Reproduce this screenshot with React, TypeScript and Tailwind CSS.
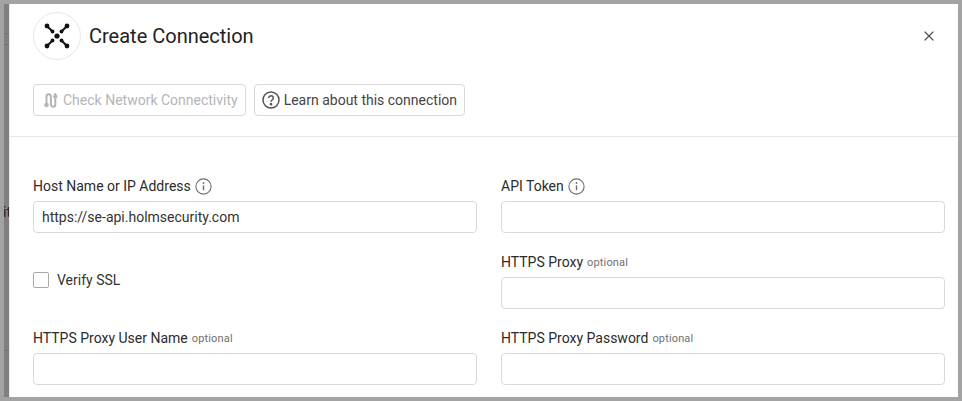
import { X } from "lucide-react";

const FONT = "font-['Roboto',sans-serif]";

function InfoIcon() {
  return (
    <svg width="17" height="17" viewBox="0 0 17 17" fill="none" className="ml-[4px] mt-[1px]">
      <circle cx="8.5" cy="8.5" r="7.6" stroke="#6e6e6e" strokeWidth="1.1" />
      <path d="M8.5 7.4v4.8" stroke="#6e6e6e" strokeWidth="1.4" />
      <circle cx="8.5" cy="5" r="0.95" fill="#6e6e6e" />
    </svg>
  );
}

function Logo() {
  return (
    <svg width="26" height="26" viewBox="0 0 26 26" fill="none">
      <path d="M3 3 8.5 8.5M23 3 17.5 8.5M3 23 8.5 17.5M23 23 17.5 17.5" stroke="#111" strokeWidth="2" />
      <circle cx="13" cy="13" r="2.6" fill="#111" />
      <circle cx="3" cy="3" r="2.4" fill="#111" />
      <circle cx="23" cy="3" r="2.4" fill="#111" />
      <circle cx="3" cy="23" r="2.4" fill="#111" />
      <circle cx="23" cy="23" r="2.4" fill="#111" />
      <circle cx="8.5" cy="8.5" r="1.9" fill="#111" />
      <circle cx="17.5" cy="8.5" r="1.9" fill="#111" />
      <circle cx="8.5" cy="17.5" r="1.9" fill="#111" />
      <circle cx="17.5" cy="17.5" r="1.9" fill="#111" />
    </svg>
  );
}

function NetworkIcon() {
  return (
    <svg width="18" height="20" viewBox="0 0 18 20" fill="none" stroke="#b5b5b5" strokeWidth="2">
      <path d="M4.5 14V6.5a2.2 2.2 0 0 1 4.4 0v8a2.2 2.2 0 0 0 4.4 0V6" />
      <path d="M11.4 7.2 13.3 3 15.2 7.2Z" fill="#b5b5b5" strokeWidth="1" />
      <circle cx="4.5" cy="15" r="2.3" fill="#b5b5b5" stroke="none" />
    </svg>
  );
}

function HelpIcon() {
  return (
    <svg width="18" height="18" viewBox="0 0 18 18" fill="none" stroke="#555" strokeWidth="1.5">
      <circle cx="9" cy="9" r="8" />
      <path d="M6.7 7a2.3 2.3 0 1 1 3.6 1.9c-.8.5-1.3 1-1.3 1.9" />
      <circle cx="9" cy="13.2" r="0.6" fill="#555" />
    </svg>
  );
}

function Label({ text, info, optional }: { text: string; info?: boolean; optional?: boolean }) {
  return (
    <div className="flex items-center h-[16px] mb-[7px] text-[14px] leading-[16px] text-[#2b2b2b]">
      <span>{text}</span>
      {info && <InfoIcon />}
      {optional && <span className="ml-[4px] mt-[2px] text-[11px] tracking-[0.15px] text-[#6f6f6f]">optional</span>}
    </div>
  );
}

function Input({ value }: { value?: string }) {
  return (
    <input
      readOnly
      value={value ?? ""}
      className="block w-full h-[32px] px-[8px] rounded-[4px] border border-[#d9d9d9] bg-white text-[14px] text-[#333] outline-none"
    />
  );
}

export default function App() {
  return (
    <div className={`${FONT} w-[962px] h-[401px] overflow-hidden bg-[#a3a3a3] flex p-[4px]`}>
      {/* sliver of the page behind the overlay */}
      <div className="w-[5px] shrink-0 bg-[#808080] overflow-hidden">
        <div className="mt-[29px] h-[1px] bg-[#6e6f78]" />
        <div className="mt-[10px] h-[1px] bg-[#6e6f78]" />
        <div className="mt-[159px] -ml-[1px] h-[16px] text-[14px] leading-[16px] text-[#1c1c1c]">it</div>
        <div className="mt-[130px] h-[1px] bg-[#6e6f78]" />
      </div>

      {/* modal */}
      <div className="flex-1 bg-white flex flex-col shadow-[inset_1px_0_0_#e8e8e8]">
        <div className="flex items-center h-[64px] pl-[24px] pr-[21px]">
          <div className="w-[48px] h-[48px] rounded-full border border-[#e4e6ef] flex items-center justify-center">
            <Logo />
          </div>
          <h1 className="ml-[8px] text-[20px] leading-[24px] font-normal text-[#222]">Create Connection</h1>
          <X className="ml-auto text-[#555]" size={16} strokeWidth={1.8} />
        </div>

        <div className="flex gap-[8px] px-[24px] mt-[16px] h-[32px]">
          <button className="flex items-center gap-[3px] pl-[8px] pr-[7px] rounded-[4px] border border-[#d9d9d9] text-[14px] text-[#b5b5b5]">
            <NetworkIcon />
            Check Network Connectivity
          </button>
          <button className="flex items-center gap-[4px] pl-[7px] pr-[7px] rounded-[4px] border border-[#d9d9d9] text-[14px] text-[#444]">
            <HelpIcon />
            Learn about this connection
          </button>
        </div>

        <div className="mt-[20px] border-t border-[#e3e8ee]" />

        <div className="grid grid-cols-2 gap-x-[24px] pl-[24px] pt-[41px] pr-[13px]">
          <div>
            <Label text="Host Name or IP Address" info />
            <Input value="https://se-api.holmsecurity.com" />
          </div>
          <div>
            <Label text="API Token" info />
            <Input />
          </div>
          <label className="flex items-center mt-[21px] h-[52px] text-[14px] text-[#333]">
            <span className="w-[16px] h-[16px] rounded-[2px] border border-[#a8a8a8] bg-white mr-[8px]" />
            Verify SSL
          </label>
          <div className="mt-[21px]">
            <Label text="HTTPS Proxy" optional />
            <Input />
          </div>
          <div className="mt-[21px]">
            <Label text="HTTPS Proxy User Name" optional />
            <Input />
          </div>
          <div className="mt-[21px]">
            <Label text="HTTPS Proxy Password" optional />
            <Input />
          </div>
        </div>
      </div>
    </div>
  );
}
